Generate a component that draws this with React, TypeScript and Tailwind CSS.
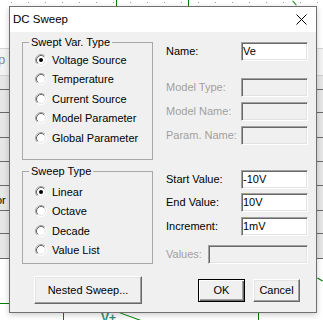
import React from "react"

const sunken =
  "border border-t-[#a0a0a0] border-l-[#a0a0a0] border-r-white border-b-white shadow-[inset_1px_1px_0_#696969,inset_-1px_-1px_0_#e3e3e3]"

const raised =
  "border border-t-white border-l-white border-r-[#696969] border-b-[#696969] shadow-[inset_-1px_-1px_0_#a0a0a0,inset_1px_1px_0_#e3e3e3] bg-[#f0f0f0]"

function Radio({ label, checked }: { label: string; checked?: boolean }) {
  return (
    <div className="flex h-[19.5px] items-center gap-[5px] pl-[12px]">
      <svg width="12" height="12" viewBox="0 0 12 12" className="shrink-0">
        <circle cx="6" cy="6" r="5.5" fill="#fff" stroke="#fff" />
        <circle cx="6" cy="6" r="4.5" fill="#fff" stroke="#e3e3e3" />
        <path d="M2.11 9.89 A5.5 5.5 0 0 1 9.89 2.11" stroke="#a0a0a0" fill="none" />
        <path d="M2.82 9.18 A4.5 4.5 0 0 1 9.18 2.82" stroke="#696969" fill="none" />
        {checked && <circle cx="6" cy="6" r="2" fill="#000" />}
      </svg>
      <span>{label}</span>
    </div>
  )
}

function GroupBox({ title, className, children }: { title: string; className: string; children: React.ReactNode }) {
  return (
    <div className={`relative border border-[#a8a8a8] ${className}`}>
      <span className="absolute -top-[8px] left-[6px] bg-[#f0f0f0] px-[2px] leading-[14px]">{title}</span>
      {children}
    </div>
  )
}

function Row({ label, value, disabled, className = "" }: { label: string; value?: string; disabled?: boolean; className?: string }) {
  return (
    <div className={`flex h-[19px] items-center ${className}`}>
      <span className={`w-[75px] ${disabled ? "text-[#a0a0a0]" : ""}`}>{label}</span>
      <div className={`h-[19px] w-[67px] pl-[1px] leading-[17px] ${sunken} ${disabled ? "bg-[#f0f0f0]" : "bg-white"}`}>{value}</div>
    </div>
  )
}

function Strip({ className }: { className: string }) {
  const rows = [14, 23, 25, 24, 24, 25, 23, 25]
  return (
    <div className={`absolute flex flex-col ${className}`}>
      <div className="h-[27px] border-t border-[#d4d4d4] bg-[#f3f3f3]" />
      <div className="border-t border-[#d0d0d0]" />
      {rows.map((h, i) => (
        <div key={i} style={{ height: h }} className="border-b border-[#6a6a6a] bg-[#e6e6e6]" />
      ))}
    </div>
  )
}

export default function App() {
  return (
    <div className="relative h-[320px] w-[323px] overflow-hidden bg-white font-['Liberation_Sans',Arial,sans-serif] text-[11px] text-black">
      {/* schematic behind the dialog */}
      <div className="absolute left-0 right-0 top-[2px] h-[1px] bg-[linear-gradient(to_right,#9c9c9c_1px,transparent_1px)] bg-[length:17px_1px] bg-[position:11px_0]" />
      <div className="absolute left-[116px] top-0 h-[6px] w-[1px] bg-[#008000]" />
      <div className="absolute left-[188px] top-0 h-[6px] w-[1px] bg-[#008000]" />
      <div className="absolute left-[294px] top-0 h-[6px] w-[1px] rotate-[-40deg] bg-[#008000]" />
      <Strip className="left-0 top-[48px] w-[9px]" />
      <Strip className="left-[317px] top-[48px] w-[6px]" />
      <span className="absolute left-[-2px] top-[52px] text-[13px] leading-[16px] text-[#8a7f9e]">p</span>
      <span className="absolute left-[-4px] top-[192px] text-[11px]">or</span>
      <div className="absolute left-0 top-[303px] h-[1px] w-[9px] bg-[#008000]" />
      <div className="absolute left-[63px] top-[313px] h-[7px] w-[1px] bg-[#008000]" />
      <div className="absolute left-[258px] top-[313px] h-[7px] w-[1px] bg-[#008000]" />
      <span className="absolute left-[101px] top-[312px] text-[12px] font-bold leading-[12px] text-[#2f8f6f]">V+</span>
      <div className="absolute left-[118px] top-[316px] h-[1px] w-[24px] rotate-[20deg] bg-[#008000]" />
      <div className="absolute left-[317px] top-[279px] h-[1px] w-[6px] rotate-[30deg] bg-[#008000]" />

      {/* dialog window */}
      <div className="absolute left-[9px] top-[6px] flex h-[307px] w-[308px] flex-col border border-[#6f6f6f] bg-[#f0f0f0] shadow-[0_2px_6px_rgba(0,0,0,0.2)]">
        <div className="flex h-[25px] items-center justify-between bg-white pl-[3px] pr-[9px]">
          <span className="text-[11.5px] leading-[13px] text-black">DC Sweep</span>
          <svg width="11" height="11" viewBox="0 0 11 11">
            <path d="M0.5 0.5 L10.5 10.5 M10.5 0.5 L0.5 10.5" stroke="#000" strokeWidth="1" />
          </svg>
        </div>

        <div className="flex pl-[12px] pt-[10px]">
          <div className="flex w-[131px] flex-col">
            <GroupBox title="Swept Var. Type" className="h-[118px] pt-[7px]">
              <Radio label="Voltage Source" checked />
              <Radio label="Temperature" />
              <Radio label="Current Source" />
              <Radio label="Model Parameter" />
              <Radio label="Global Parameter" />
            </GroupBox>
            <GroupBox title="Sweep Type" className="mt-[11px] h-[93px] pt-[10px]">
              <Radio label="Linear" checked />
              <Radio label="Octave" />
              <Radio label="Decade" />
              <Radio label="Value List" />
            </GroupBox>
          </div>

          <div className="ml-[13px] flex w-[142px] flex-col">
            <Row label="Name:" value="Ve" />
            <Row label="Model Type:" disabled className="mt-[17px]" />
            <Row label="Model Name:" disabled className="mt-[5px]" />
            <Row label="Param. Name:" disabled className="mt-[5px]" />
            <Row label="Start Value:" value="-10V" className="mt-[25px]" />
            <Row label="End Value:" value="10V" className="mt-[4px]" />
            <Row label="Increment:" value="1mV" className="mt-[5px]" />
            <div className="mt-[9px] flex h-[19px] items-center">
              <span className="w-[42px] text-[#a0a0a0]">Values:</span>
              <div className={`h-[19px] w-[100px] bg-[#f0f0f0] ${sunken}`} />
            </div>
          </div>
        </div>

        <div className="mt-[12px] flex items-center pl-[24px]">
          <button className={`h-[28px] w-[108px] ${raised}`}>Nested Sweep...</button>
          <button className="ml-[56px] h-[23px] w-[47px] border border-black bg-[#f0f0f0] shadow-[inset_1px_1px_0_#fff,inset_-1px_-1px_0_#696969,inset_-2px_-2px_0_#a0a0a0]">
            OK
          </button>
          <button className={`ml-[8px] h-[23px] w-[47px] ${raised}`}>Cancel</button>
        </div>
      </div>
    </div>
  )
}
